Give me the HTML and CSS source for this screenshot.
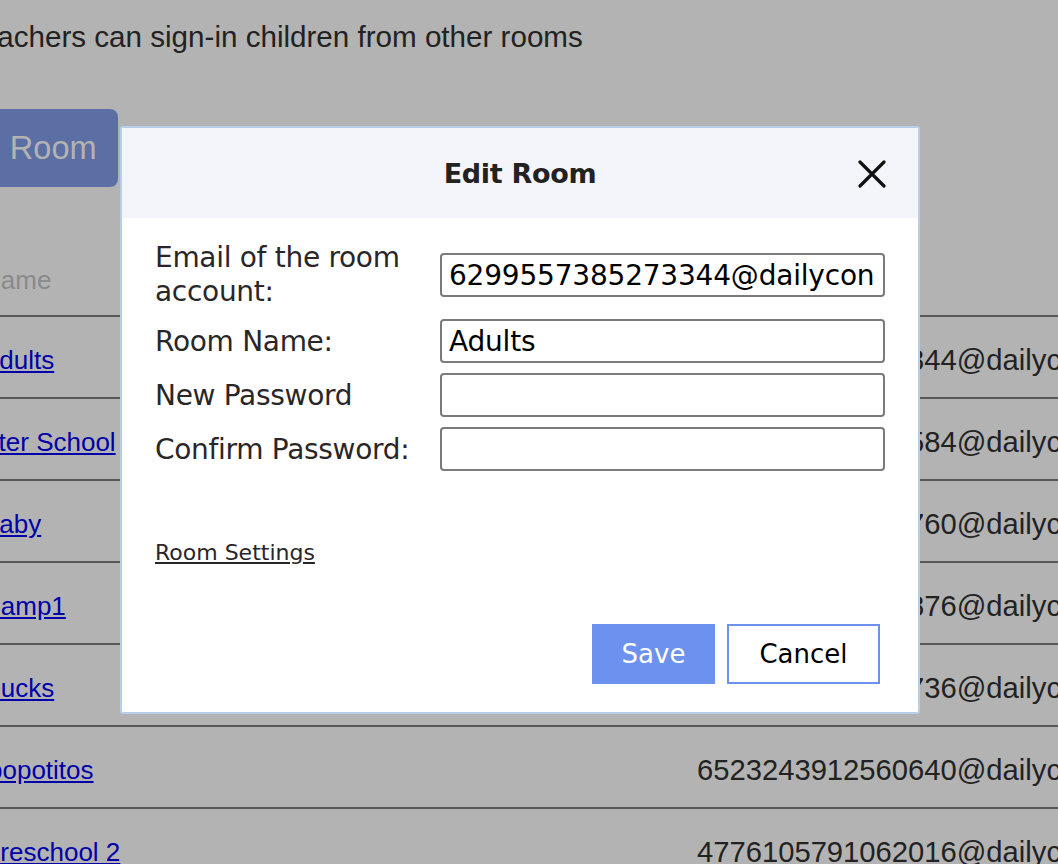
FILE: index.html
```html
<!DOCTYPE html>
<html>
<head>
<meta charset="utf-8">
<link rel="stylesheet" href="styles.css">
</head>
<body>
<div class="page">
  <p class="notice">Teachers can sign-in children from other rooms</p>
  <button class="add-btn">Add Room</button>
  <table class="rooms">
    <colgroup><col class="col-name"><col class="col-email"></colgroup>
    <thead>
      <tr><th><span class="nm">Name</span></th><th>Email</th></tr>
    </thead>
    <tbody>
      <tr><td><a href="#" class="nm">Adults</a></td><td class="c-email">6299557385273344@dailyconnect.com</td></tr>
      <tr><td><a href="#" class="nm n2">After School</a></td><td class="c-email">5166297302171584@dailyconnect.com</td></tr>
      <tr><td><a href="#" class="nm">Baby</a></td><td class="c-email">5707004565741760@dailyconnect.com</td></tr>
      <tr><td><a href="#" class="nm">Camp1</a></td><td class="c-email">5091370203250876@dailyconnect.com</td></tr>
      <tr><td><a href="#" class="nm">Ducks</a></td><td class="c-email">5431807281254736@dailyconnect.com</td></tr>
      <tr><td><a href="#" class="nm n6">Hippopotitos</a></td><td class="c-email">6523243912560640@dailyconnect.com</td></tr>
      <tr><td><a href="#" class="nm n7">Preschool 2</a></td><td class="c-email">4776105791062016@dailyconnect.com</td></tr>
    </tbody>
  </table>
</div>

<div class="modal">
  <div class="modal-head">
    <h2 class="modal-title">Edit Room</h2>
    <button class="close" aria-label="Close">
      <svg width="28" height="28" viewBox="0 0 28 28"><path d="M2 2 L26 26 M26 2 L2 26" stroke="#111" stroke-width="3.2" stroke-linecap="round"/></svg>
    </button>
  </div>
  <div class="modal-body">
    <div class="form">
      <label class="lbl lbl-2">Email of the room account:</label>
      <input class="inp" type="text" value="6299557385273344@dailyconnect.com">
      <label class="lbl">Room Name:</label>
      <input class="inp" type="text" value="Adults">
      <label class="lbl">New Password</label>
      <input class="inp" type="password">
      <label class="lbl">Confirm Password:</label>
      <input class="inp" type="password">
    </div>
    <a href="#" class="settings">Room Settings</a>
    <div class="actions">
      <button class="btn btn-save">Save</button>
      <button class="btn btn-cancel">Cancel</button>
    </div>
  </div>
</div>
</body>
</html>
```
FILE: styles.css
```css
html, body {
  margin: 0;
  padding: 0;
  width: 1058px;
  height: 864px;
  overflow: hidden;
  background: #b3b3b3;
  font-family: "Liberation Sans", Arial, sans-serif;
}

.page {
  position: relative;
  margin-left: -30px;
  width: 1200px;
}

.notice {
  margin: 0 0 0 -4px;
  padding-top: 22px;
  font-size: 29.6px;
  line-height: 30px;
  color: #222;
  white-space: nowrap;
}

.add-btn {
  display: block;
  margin: 57px 0 0 -48px;
  height: 78px;
  padding: 0 21px;
  border: none;
  border-radius: 8px;
  background: #5b6fa4;
  color: #b3b3b3;
  font-family: "Liberation Sans", Arial, sans-serif;
  font-size: 32.5px;
}

.rooms {
  margin-top: 52px;
  border-collapse: collapse;
  table-layout: fixed;
  width: 1200px;
  font-size: 26px;
}

.col-name { width: 727px; }
.col-email { width: 473px; }

.rooms th {
  text-align: left;
  font-weight: normal;
  color: #8a8a8a;
  height: 70px;
  padding: 6px 0 0 0;
  vertical-align: middle;
  border-bottom: 2px solid #585858;
  white-space: nowrap;
}

.rooms td {
  height: 73px;
  padding: 7px 0 0 0;
  vertical-align: middle;
  border-bottom: 2px solid #585858;
  color: #222;
  white-space: nowrap;
  overflow: visible;
}

.nm { margin-left: 12px; }
.rooms .c-email { font-size: 29.2px; }
.rooms a { color: #0000a8; text-decoration: underline; }
.rooms a.n2 { margin-left: 4px; }
.rooms a.n6 { margin-left: -21px; }
.rooms a.n7 { margin-left: 13px; }

.modal {
  position: absolute;
  left: 120px;
  top: 126px;
  box-sizing: border-box;
  width: 800px;
  height: 588px;
  background: #fff;
  border: 2px solid #b7cfe8;
  border-radius: 3px;
  font-family: "DejaVu Sans", "Open Sans", sans-serif;
  color: #2a2628;
  display: flex;
  flex-direction: column;
}

.modal-head {
  height: 90px;
  flex: none;
  background: #f4f5fa;
  display: flex;
  align-items: center;
  justify-content: center;
  position: relative;
}

.modal-title {
  margin: 0;
  font-size: 27px;
  font-weight: bold;
  color: #222;
  letter-spacing: -0.3px;
}

.close {
  position: absolute;
  right: 32px;
  top: 32px;
  width: 28px;
  height: 28px;
  padding: 0;
  border: none;
  background: none;
  display: block;
}
.close svg { display: block; }

.modal-body {
  padding: 23px 38px 0 33px;
  display: flex;
  flex-direction: column;
  flex: 1;
}

.form {
  display: grid;
  grid-template-columns: 285px 445px;
  row-gap: 10px;
  align-items: center;
}

.lbl {
  font-size: 28px;
  line-height: 35px;
  color: #2a2628;
  letter-spacing: -0.3px;
}

.lbl-2 { line-height: 34px; padding-right: 20px; }

.inp {
  box-sizing: border-box;
  height: 44px;
  width: 445px;
  border: 2px solid #7a7a7a;
  border-radius: 4px;
  padding: 0 7px;
  font-family: "DejaVu Sans", "Open Sans", sans-serif;
  font-size: 28px;
  letter-spacing: -0.2px;
  color: #000;
  background: #fff;
  outline: none;
}

.settings {
  margin-top: 69px;
  align-self: flex-start;
  font-size: 22px;
  color: #2a2628;
  text-decoration: underline;
}

.actions {
  margin-top: auto;
  margin-bottom: 28px;
  display: flex;
  justify-content: flex-end;
  gap: 12px;
}

.btn {
  box-sizing: border-box;
  height: 60px;
  font-family: "DejaVu Sans", "Open Sans", sans-serif;
  font-size: 26px;
  padding: 0;
}

.btn-save {
  width: 123px;
  background: #6d91ee;
  border: none;
  color: #fff;
}

.btn-cancel {
  width: 153px;
  background: #fff;
  border: 2px solid #6d91ee;
  color: #000;
}
```
